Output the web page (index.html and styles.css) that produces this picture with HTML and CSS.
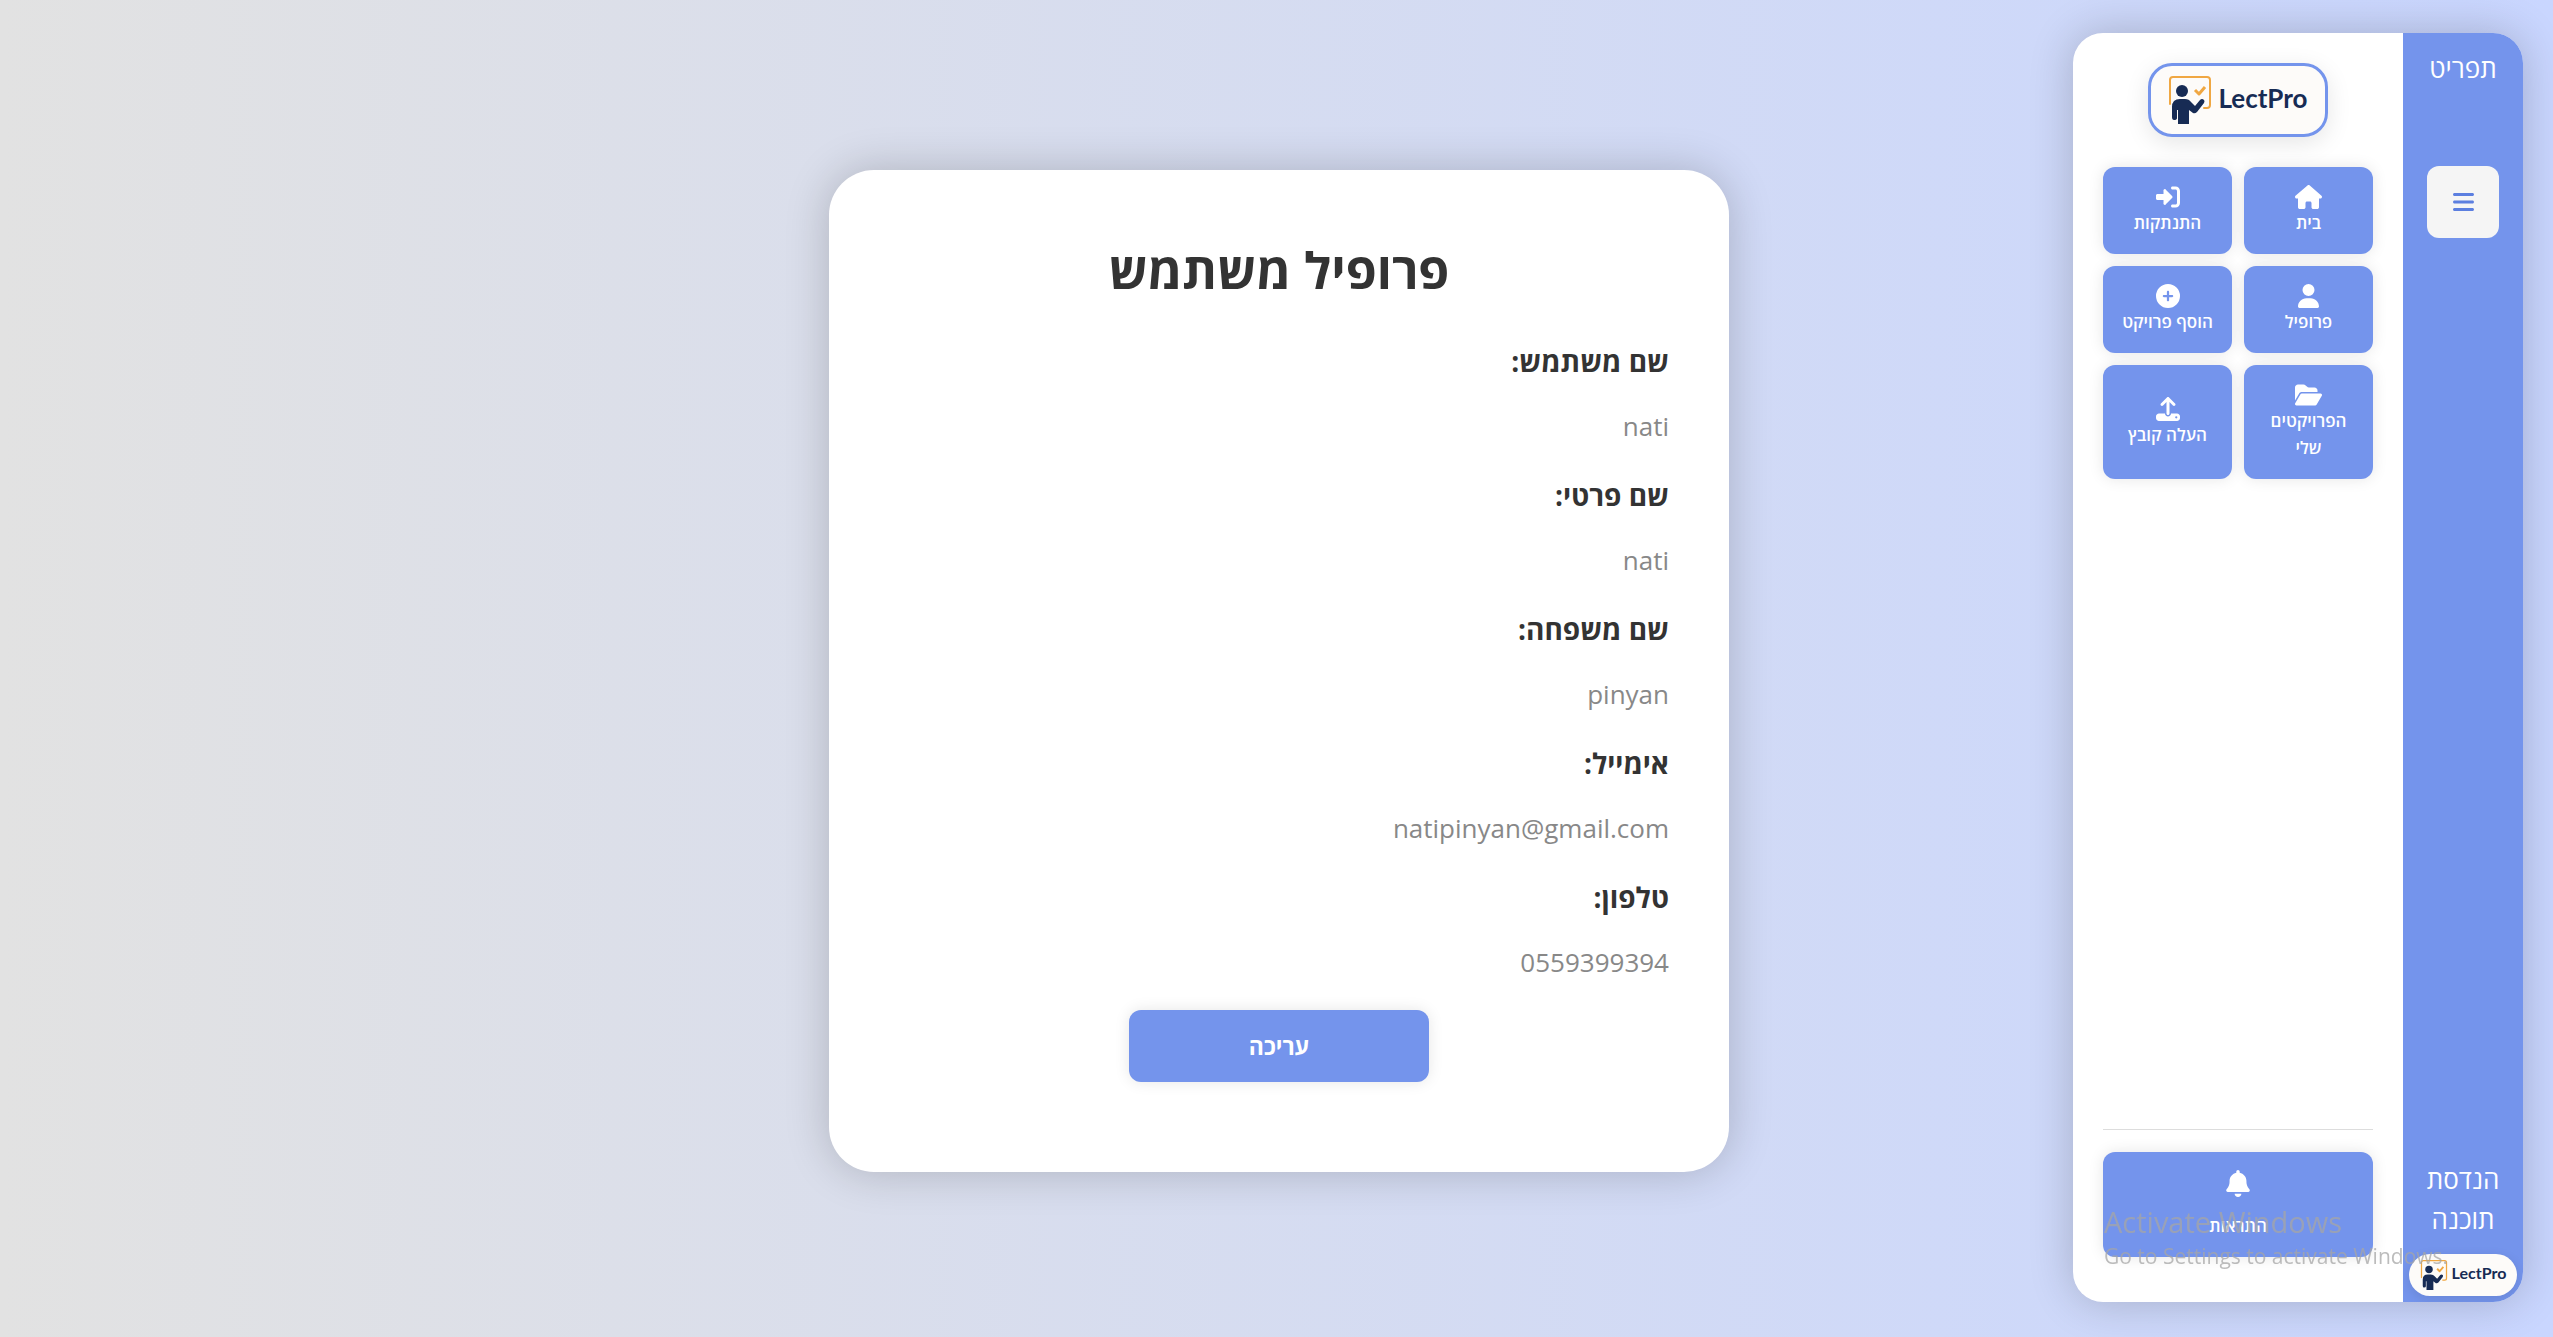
FILE: index.html
```html
<!DOCTYPE html>
<html lang="he" dir="rtl">
<head>
<meta charset="utf-8">
<title>LectPro</title>
<link rel="stylesheet" href="styles.css">
</head>
<body>
<svg class="sprite" aria-hidden="true">
  <symbol id="presenter" viewBox="0 0 44 48">
    <path d="M2 28V4q0-3 3-3h34q3 0 3 3v25q0 3-3 3h-3" fill="none" stroke="#f0a742" stroke-width="2" stroke-linecap="round"/>
    <path d="M27 14l4 4 6-7" fill="none" stroke="#f0a742" stroke-width="3" stroke-linejoin="round"/>
    <circle cx="14" cy="15" r="6" fill="#172b54"/>
    <path d="M4 31q0-8 8-8h5q4 0 6 3l4 4 5-6q2-2 4 0 1 1 0 3l-7 9q-2 2-4 1l-4-3v14H10V34H9v8q0 2-3 2-2 0-2-3z" fill="#172b54"/>
  </symbol>
</svg>

<aside class="sidebar">
  <div class="strip">
    <h2 class="strip-title">תפריט</h2>
    <button class="toggle" type="button" aria-label="תפריט">
      <svg viewBox="0 0 448 512" width="21" height="24"><path fill="currentColor" d="M0 96C0 78.300 14.300 64 32 64H416c17.700 0 32 14.300 32 32s-14.300 32-32 32H32C14.300 128 0 113.700 0 96zM0 256c0-17.700 14.300-32 32-32H416c17.700 0 32 14.300 32 32s-14.300 32-32 32H32c-17.700 0-32-14.300-32-32zM448 416c0 17.700-14.300 32-32 32H32c-17.700 0-32-14.300-32-32s14.300-32 32-32H416c17.700 0 32 14.300 32 32z"/></svg>
    </button>
    <p class="department">הנדסת תוכנה</p>
    <div class="logo logo-small" dir="ltr"><svg class="logo-mark"><use href="#presenter"/></svg><span class="logo-name">LectPro</span></div>
  </div>
  <div class="panel">
    <div class="logo logo-large" dir="ltr"><svg class="logo-mark"><use href="#presenter"/></svg><span class="logo-name">LectPro</span></div>
    <nav class="menu">
      <button class="tile" type="button"><svg viewBox="0 0 576 512" width="27" height="24"><path fill="currentColor" d="M575.800 255.500c0 18-15 32.100-32 32.100h-32l.7 160.200c0 2.700-.2 5.400-.5 8.100V472c0 22.100-17.900 40-40 40H456c-1.100 0-2.200 0-3.300-.1-1.400 .1-2.800 .1-4.200 .1H392c-22.100 0-40-17.900-40-40V384c0-17.700-14.300-32-32-32H256c-17.700 0-32 14.300-32 32v88c0 22.100-17.900 40-40 40H128.100c-1.500 0-3-.1-4.500-.2-1.200 .1-2.400 .2-3.600 .2H104c-22.100 0-40-17.900-40-40V287.600H32c-18 0-32-14-32-32.100 0-9 3-17 10-24L266.400 8c7-7 15-8 22-8s15 2 21 7L564.800 231.500c8 7 12 15 11 24z"/></svg><span>בית</span></button>
      <button class="tile" type="button"><svg viewBox="0 0 512 512" width="24" height="24"><path fill="currentColor" d="M352 96h64c17.700 0 32 14.300 32 32v256c0 17.700-14.300 32-32 32h-64c-17.700 0-32 14.300-32 32s14.300 32 32 32h64c53 0 96-43 96-96V128c0-53-43-96-96-96h-64c-17.700 0-32 14.300-32 32s14.300 32 32 32zM342.600 278.600c12.500-12.500 12.500-32.800 0-45.300l-128-128A24 24 0 0 0 160 128v64H32c-17.700 0-32 14.300-32 32v64c0 17.700 14.300 32 32 32h128v64a24 24 0 0 0 54.600 22.600z"/></svg><span>התנתקות</span></button>
      <button class="tile" type="button"><svg viewBox="0 0 448 512" width="21" height="24"><path fill="currentColor" d="M224 256A128 128 0 1 0 224 0a128 128 0 1 0 0 256zm-45.700 48C79.800 304 0 383.800 0 482.300 0 498.700 13.300 512 29.700 512H418.300c16.400 0 29.700-13.300 29.700-29.700C448 383.800 368.200 304 269.700 304z"/></svg><span>פרופיל</span></button>
      <button class="tile" type="button"><svg viewBox="0 0 512 512" width="24" height="24"><path fill="currentColor" d="M256 512A256 256 0 1 0 256 0a256 256 0 1 0 0 512zM232 344V280H168c-13.300 0-24-10.700-24-24s10.700-24 24-24h64V168c0-13.300 10.700-24 24-24s24 10.700 24 24v64h64c13.300 0 24 10.700 24 24s-10.700 24-24 24H280v64c0 13.300-10.700 24-24 24s-24-10.700-24-24z"/></svg><span>הוסף פרויקט</span></button>
      <button class="tile" type="button"><svg viewBox="0 0 576 512" width="27" height="24"><path fill="currentColor" d="M88.700 223.800L0 375.800V96C0 60.700 28.700 32 64 32H181.500c17 0 33.300 6.700 45.300 18.700l26.500 26.500c12 12 28.300 18.700 45.300 18.700H416c35.300 0 64 28.700 64 64v32H144c-22.800 0-43.800 12.100-55.300 31.800zm27.600 16.100C122.100 230 132.600 224 144 224H544c11.500 0 22 6.100 27.700 16.100s5.700 22.200-.1 32.100l-112 192C453.900 474 443.400 480 432 480H32c-11.500 0-22-6.100-27.700-16.100s-5.700-22.200 .1-32.100z"/></svg><span>הפרויקטים שלי</span></button>
      <button class="tile" type="button"><svg viewBox="0 0 512 512" width="24" height="24"><path fill="currentColor" d="M288 109.300V352c0 17.700-14.300 32-32 32s-32-14.300-32-32V109.300l-73.400 73.400c-12.500 12.500-32.800 12.500-45.300 0s-12.500-32.800 0-45.300l128-128c12.500-12.500 32.800-12.500 45.300 0l128 128c12.500 12.500 12.500 32.800 0 45.300s-32.800 12.500-45.300 0zM64 352H192c0 35.300 28.700 64 64 64s64-28.700 64-64H448c35.300 0 64 28.700 64 64v32c0 35.300-28.700 64-64 64H64c-35.300 0-64-28.700-64-64V416c0-35.300 28.700-64 64-64zM432 456a24 24 0 1 0 0-48 24 24 0 1 0 0 48z"/></svg><span>העלה קובץ</span></button>
    </nav>
    <div class="panel-footer">
      <button class="tile tile-wide" type="button"><svg viewBox="0 0 448 512" width="24" height="27"><path fill="currentColor" d="M224 0c-17.700 0-32 14.300-32 32V51.200C119 66 64 130.600 64 208v18.800c0 47-17.300 92.400-48.500 127.600l-7.400 8.300c-8.400 9.400-10.400 22.900-5.300 34.400S19.400 416 32 416H416c12.600 0 24-7.400 29.200-18.900s3.100-25-5.300-34.400l-7.400-8.300C401.300 319.200 384 273.900 384 226.800V208c0-77.400-55-142-128-156.800V32c0-17.700-14.300-32-32-32zm45.300 493.300c12-12 18.700-28.300 18.700-45.300H160c0 17 6.700 33.300 18.700 45.300s28.300 18.700 45.300 18.700 33.300-6.700 45.300-18.700z"/></svg><span>התראות</span></button>
    </div>
  </div>
</aside>

<main class="card">
  <h1 class="card-title">פרופיל משתמש</h1>
  <dl class="details">
    <dt>שם משתמש:</dt><dd>nati</dd>
    <dt>שם פרטי:</dt><dd>nati</dd>
    <dt>שם משפחה:</dt><dd>pinyan</dd>
    <dt>אימייל:</dt><dd>natipinyan@gmail.com</dd>
    <dt>טלפון:</dt><dd>0559399394</dd>
  </dl>
  <button class="edit" type="button">עריכה</button>
</main>

<div class="watermark" dir="ltr">
  <p class="watermark-title">Activate Windows</p>
  <p class="watermark-text">Go to Settings to activate Windows.</p>
</div>
</body>
</html>
```
FILE: styles.css
```css
:root {
  --blue: #7494ec;
  --navy: #172b54;
}

* {
  box-sizing: border-box;
  margin: 0;
  padding: 0;
}

body {
  display: grid;
  grid-template-columns: 1fr auto 1fr;
  align-items: center;
  min-height: 100vh;
  padding: 33px 30px 35px 35px;
  font-family: "Open Sans", "Noto Sans", sans-serif;
  background: linear-gradient(to right, #e2e2e2, #c9d6ff);
}

button {
  border: 0;
  font-family: inherit;
  cursor: pointer;
}

.sprite {
  position: absolute;
  width: 0;
  height: 0;
}

/* Sidebar */
.sidebar {
  display: flex;
  align-self: stretch;
  width: 450px;
  overflow: hidden;
  border-radius: 30px;
  background: #fff;
  box-shadow: 0 0 45px rgba(0, 0, 0, 0.2);
}

.strip {
  display: flex;
  flex-direction: column;
  align-items: center;
  width: 120px;
  padding: 15px 6px 6px;
  background: var(--blue);
  color: #fff;
}

.strip-title,
.department {
  font-size: 26px;
  font-weight: 400;
  line-height: 40px;
  text-align: center;
}

.toggle {
  display: grid;
  place-items: center;
  width: 72px;
  height: 72px;
  margin-top: 78px;
  border-radius: 12px;
  background: #f5f5f5;
  color: #5c7fe0;
}

.department {
  width: 90px;
  margin-top: auto;
  margin-bottom: 15px;
}

.logo {
  display: flex;
  align-items: center;
  justify-content: center;
  background: #fdfbf9;
  color: var(--navy);
  font-family: Lato, sans-serif;
  font-weight: 700;
}

.logo-name {
  padding-bottom: 5px;
}

.logo-large {
  align-self: center;
  gap: 6px;
  width: 180px;
  height: 74px;
  border: 3px solid var(--blue);
  border-radius: 24px;
  font-size: 26px;
  box-shadow: 0 6px 24px rgba(0, 0, 0, 0.1);
}

.logo-large .logo-mark {
  width: 44px;
  height: 48px;
}

.logo-small {
  gap: 4px;
  width: 108px;
  height: 42px;
  border-radius: 21px;
  font-size: 16px;
  box-shadow: 0 3px 12px rgba(0, 0, 0, 0.1);
}

.logo-small .logo-mark {
  width: 28px;
  height: 30px;
}

.panel {
  display: flex;
  flex: 1;
  flex-direction: column;
  padding: 30px 30px 45px;
}

.menu {
  display: grid;
  grid-template-columns: 1fr 1fr;
  gap: 12px;
  margin-top: 30px;
}

.tile {
  display: flex;
  flex-direction: column;
  align-items: center;
  justify-content: center;
  padding: 18px;
  border-radius: 12px;
  background: var(--blue);
  color: #fff;
  font-size: 17px;
  font-weight: 600;
  line-height: 27px;
  box-shadow: 0 0 15px rgba(0, 0, 0, 0.1);
}

.menu .tile {
  padding: 18px 15px;
}

.panel-footer {
  margin-top: auto;
  padding-top: 22px;
  border-top: 1px solid #ddd;
}

.tile-wide {
  width: 100%;
  gap: 15px;
}

/* Profile card */
.card {
  display: flex;
  flex-direction: column;
  width: 900px;
  margin-top: 6px;
  padding: 60px 60px 90px;
  border-radius: 45px;
  background: #fff;
  color: #333;
  box-shadow: 0 0 45px rgba(0, 0, 0, 0.2);
}

.card-title {
  margin-bottom: 30px;
  font-size: 50px;
  font-weight: 700;
  line-height: 80px;
  text-align: center;
}

.details dt {
  margin-bottom: 24px;
  font-size: 28px;
  font-weight: 700;
  line-height: 42px;
}

.details dd {
  margin-bottom: 28px;
  color: #888;
  font-size: 26px;
  line-height: 40px;
}

.edit {
  align-self: center;
  width: 300px;
  height: 72px;
  border-radius: 12px;
  background: var(--blue);
  color: #fff;
  font-size: 23px;
  font-weight: 700;
  box-shadow: 0 0 15px rgba(0, 0, 0, 0.1);
}

/* System notice floating above the page */
.watermark {
  position: fixed;
  right: 112px;
  bottom: 66px;
  width: 337px;
  color: rgba(165, 165, 165, 0.75);
  white-space: nowrap;
  pointer-events: none;
}

.watermark-title {
  font-size: 29px;
  line-height: 38px;
}

.watermark-text {
  font-size: 21px;
  line-height: 30px;
}
```
